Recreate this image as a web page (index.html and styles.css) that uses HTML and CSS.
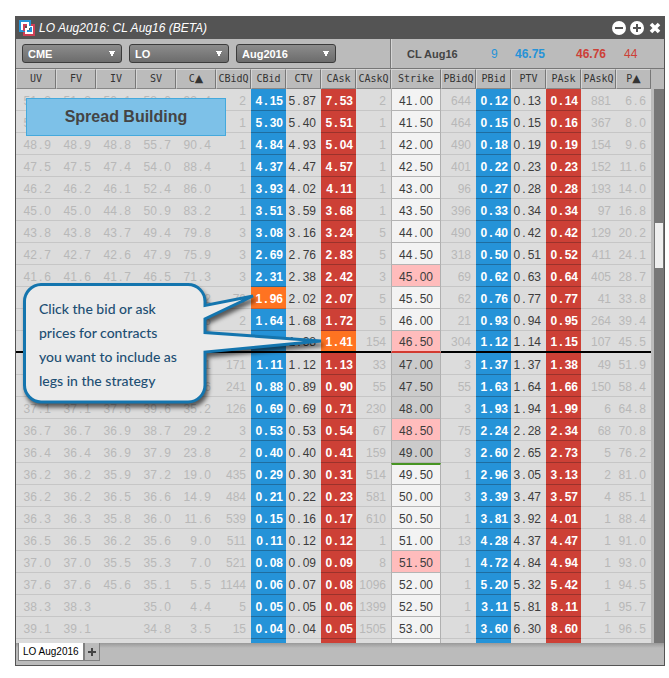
FILE: index.html
```html
<!DOCTYPE html>
<html lang="en">
<head>
<meta charset="utf-8">
<title>LO Aug2016: CL Aug16 (BETA)</title>
<link rel="stylesheet" href="styles.css">
</head>
<body>
<main class="window">
  <header class="titlebar">
    <svg class="logo" viewBox="0 0 16 16" aria-hidden="true">
      <g fill="none" stroke-width="2">
        <rect x="5" y="5" width="10" height="10" stroke="#cf3f55"/>
        <path d="M1 12V1h11" stroke="#2593d8"/>
        <path d="M11 0v6M0 11h6" stroke="#2593d8"/>
        <rect x="3" y="3" width="6" height="6" stroke="#fff"/>
        <path d="M13 6v7H6M10 7h4M7 10v4" stroke="#fff"/>
        <path d="M5 11V5h2" stroke="#cf3f55"/>
        <path d="M8 11h4V7" stroke="#2593d8"/>
      </g>
    </svg>
    <h1 class="title">LO Aug2016: CL Aug16 (BETA)</h1>
    <div class="window-buttons">
      <button type="button" aria-label="Minimize"><svg viewBox="0 0 14 14"><circle cx="7" cy="7" r="7" fill="#fff"/><path d="M3 7h8" stroke="#545454" stroke-width="2"/></svg></button>
      <button type="button" aria-label="Maximize"><svg viewBox="0 0 14 14"><circle cx="7" cy="7" r="7" fill="#fff"/><path d="M3 7h8M7 3v8" stroke="#545454" stroke-width="2"/></svg></button>
      <button type="button" aria-label="Close"><svg viewBox="0 0 14 14"><path d="M3 3l8 8M11 3l-8 8" stroke="#fff" stroke-width="3.6"/></svg></button>
    </div>
  </header>

  <div class="toolbar">
    <div class="filters">
      <select class="filter" aria-label="Exchange"><option>CME</option></select>
      <select class="filter" aria-label="Product"><option>LO</option></select>
      <select class="filter" aria-label="Expiry"><option>Aug2016</option></select>
    </div>
    <div class="quote">
      <span class="quote-name">CL Aug16</span>
      <span class="bid">9</span>
      <strong class="bid">46.75</strong>
      <strong class="ask">46.76</strong>
      <span class="ask">44</span>
    </div>
  </div>

  <div class="grid">
    <table class="chain">
      <colgroup>
        <col span="5" class="c-greek">
        <col span="5" class="c-price">
        <col class="c-strike">
        <col span="6" class="c-price">
      </colgroup>
      <thead>
        <tr>
          <th>UV</th><th>FV</th><th>IV</th><th>SV</th><th>C<span class="delta">▲</span></th>
          <th>CBidQ</th><th>CBid</th><th>CTV</th><th>CAsk</th><th>CAskQ</th>
          <th>Strike</th>
          <th>PBidQ</th><th>PBid</th><th>PTV</th><th>PAsk</th><th>PAskQ</th><th>P<span class="delta">▲</span></th>
        </tr>
      </thead>
      <tbody id="rows"></tbody>
    </table>
    <div class="scrollbar"><div class="thumb"></div></div>
  </div>

  <footer class="tabs">
    <button type="button" class="tab tab-active">LO Aug2016</button>
    <button type="button" class="tab tab-add" aria-label="Add tab"><svg viewBox="0 0 8 8"><path d="M0 4h8M4 0v8" stroke="#444" stroke-width="2"/></svg></button>
  </footer>

  <div class="banner">Spread Building</div>

  <div class="callout">
    <svg class="callout-shape" viewBox="0 0 184 121" aria-hidden="true">
      <path d="M18 1.5H165A17 17 0 0 1 182 18.500V22.500L230 13L182 36V49.500L298 58L182 69V102A17 17 0 0 1 165 119H18A17 17 0 0 1 1.500 102V18.500A17 17 0 0 1 18 1.500Z" fill="#ebebeb" stroke="#1475ae" stroke-width="3"/>
    </svg>
    <p class="callout-text">Click the bid or ask<br>prices for contracts<br>you want to include as<br>legs in the strategy</p>
  </div>
</main>
<script src="app.js"></script>
</body>
</html>
```
FILE: styles.css
```css
* {
  box-sizing: border-box;
}

body {
  margin: 0;
  padding: 16px 4px 12px 15px;
  background: #fff;
  font-family: "Liberation Sans", Arial, sans-serif;
  font-size: 12px;
  color: #444;
}

.window {
  position: relative;
  border: 1px solid #545454;
  border-top: 0;
  background: #bbb;
}

.titlebar {
  display: flex;
  align-items: center;
  gap: 4px;
  height: 23px;
  padding: 0 2px 0 3px;
  background: #545454;
}

.logo {
  width: 16px;
  height: 16px;
}

.title {
  flex: 1;
  margin: 0;
  font-size: 12px;
  font-style: italic;
  font-weight: normal;
  color: #fff;
}

.window-buttons {
  display: flex;
  gap: 4px;
}

.window-buttons button {
  width: 14px;
  height: 14px;
  padding: 0;
  border: 0;
  background: none;
}

.window-buttons svg {
  display: block;
}

.toolbar {
  display: grid;
  grid-template-columns: 375fr 273fr;
  height: 30px;
  border-bottom: 1px solid #777;
}

.filters {
  display: flex;
  align-items: center;
  gap: 7px;
  padding: 0 6px;
  border-right: 1px solid #777;
}

.filter {
  appearance: none;
  width: 100px;
  height: 19px;
  padding: 0 5px;
  border: 1px solid #3c3c3c;
  border-radius: 3px;
  background:
    linear-gradient(to bottom right, #fff 50%, transparent 50%) right 6px center / 3px 6px no-repeat,
    linear-gradient(to bottom left, #fff 50%, transparent 50%) right 9px center / 3px 6px no-repeat,
    linear-gradient(#8c8c8c, #6c6c6c);
  font: bold 11px "Liberation Sans", Arial, sans-serif;
  color: #fff;
}

.quote {
  display: grid;
  grid-template-columns: 84fr 24fr 61fr 48fr 40fr;
  align-items: center;
  padding-left: 15px;
  border-left: 1px solid #d6d6d6;
}

.quote-name {
  font-size: 11px;
  font-weight: bold;
}

.bid {
  color: #2593d8;
}

.ask {
  color: #cd4036;
}

.grid {
  display: flex;
  gap: 3px;
}

.chain {
  flex: 1;
  table-layout: fixed;
  border-spacing: 0;
  background: #dcdcdc;
}

.c-greek {
  width: 40px;
}

.c-price {
  width: 35px;
}

.c-strike {
  width: 50px;
}

.chain th {
  height: 20px;
  padding: 0;
  border: 1px solid #d6d6d6;
  border-right-color: #777;
  border-bottom-color: #888;
  background: #bbb;
  font: 10px "DejaVu Sans Mono", monospace;
  line-height: 18px;
  color: #333;
}

.delta {
  font: 11px "DejaVu Sans", sans-serif;
  line-height: 1;
}

.chain td {
  height: 22px;
  padding: 4px 5px 0 0;
  border-bottom: 1px solid #c6c6c6;
  line-height: 17px;
  text-align: right;
  white-space: nowrap;
  color: #b8b8b8;
}

.point {
  padding: 0 2px;
}

.chain .value {
  color: #3c3c3c;
}

.chain .buy,
.chain .sell {
  padding-right: 3px;
  font-weight: bold;
  color: #fff;
}

.chain .buy {
  border-bottom-color: #1f6d9f;
  background: #2593d8;
}

.chain .sell {
  border-bottom-color: #9a322b;
  background: #cd4036;
}

.chain .picked {
  border-bottom-color: #c8602a;
  background: #ff7321;
}

.chain .strike {
  padding-right: 0;
  border-right: 1px solid #b0b0b0;
  border-left: 1px solid #b0b0b0;
  border-bottom-color: #b4b4b4;
  background: #f3f3f3;
  text-align: center;
  color: #3c3c3c;
}

.chain .inner {
  background: #cbcbcb;
}

.chain .marked {
  background: #ffbcbc;
}

.chain .at-money td {
  padding-top: 3px;
  border-bottom: 2px solid #000;
}

.chain .at-money .strike {
  border-bottom-color: #d23a30;
}

.chain .settle .strike {
  padding-top: 2px;
  border-top: 2px solid #479422;
}

.chain .rest td {
  height: 4px;
  padding: 0;
  border-bottom: 0;
}

.scrollbar {
  width: 10px;
  margin-top: 20px;
  padding: 134px 1px 0;
  background: #777;
}

.thumb {
  height: 45px;
  background: #eee;
}

.tabs {
  display: flex;
  height: 22px;
  padding: 0 2px 4px;
  background: linear-gradient(#999, #bbb 5px);
}

.tab {
  padding: 0 4px;
  border: 1px solid #808080;
  border-top: 0;
  background: #bbb;
  font: 10px "Liberation Sans", Arial, sans-serif;
  color: #000;
}

.tab-active {
  background: #fff;
}

.tab-add {
  width: 16px;
  padding: 0 3px;
}

.tab-add svg {
  display: block;
  width: 8px;
  height: 8px;
}

.banner {
  position: absolute;
  top: 82px;
  left: 10px;
  width: 200px;
  border: 1px solid #45a9dc;
  background: #7dc1e8;
  font-size: 16px;
  font-weight: bold;
  line-height: 36px;
  text-align: center;
}

.callout {
  position: absolute;
  top: 267px;
  left: 7px;
  width: 184px;
  height: 121px;
  padding: 14px 0 0 16px;
}

.callout-shape {
  position: absolute;
  inset: 0;
  overflow: visible;
  filter: drop-shadow(2px 4px 2px rgba(0, 0, 0, 0.6));
}

.callout-text {
  position: relative;
  margin: 0;
  font: 500 14px/24px Lato, sans-serif;
  white-space: nowrap;
  color: #1d4f73;
}
```
FILE: app.js
```js
// UV FV IV SV C▲ CBidQ CBid CTV CAsk CAskQ Strike PBidQ PBid PTV PAsk PAskQ P▲
const rows = `
51.2 51.2 50.1 58.0 92.4 2 4.15 5.87 7.53 2 41.00 644 0.12 0.13 0.14 881 6.6
50.2 50.2 49.8 56.8 91.5 1 5.30 5.40 5.51 1 41.50 464 0.15 0.15 0.16 367 8.0
48.9 48.9 48.8 55.7 90.4 1 4.84 4.93 5.04 1 42.00 490 0.18 0.19 0.19 154 9.6
47.5 47.5 47.4 54.0 88.4 1 4.37 4.47 4.57 1 42.50 401 0.22 0.23 0.23 152 11.6
46.2 46.2 46.1 52.4 86.0 1 3.93 4.02 4.11 1 43.00 96 0.27 0.28 0.28 193 14.0
45.0 45.0 44.8 50.9 83.2 1 3.51 3.59 3.68 1 43.50 396 0.33 0.34 0.34 97 16.8
43.8 43.8 43.7 49.4 79.8 3 3.08 3.16 3.24 5 44.00 490 0.40 0.42 0.42 129 20.2
42.7 42.7 42.6 47.9 75.9 3 2.69 2.76 2.83 5 44.50 318 0.50 0.51 0.52 411 24.1
41.6 41.6 41.7 46.5 71.3 3 2.31 2.38 2.42 3 45.00* 69 0.62 0.63 0.64 405 28.7
40.6 40.6 40.7 45.1 66.2 79 1.96! 2.02 2.07 5 45.50 62 0.76 0.77 0.77 41 33.8
39.6 39.6 39.8 43.8 60.6 2 1.64 1.68 1.72 5 46.00 21 0.93 0.94 0.95 264 39.4
38.9 38.9 39.0 42.6 54.5 5 1.36 1.38 1.41! 154 46.50* 304 1.12 1.14 1.15 107 45.5
38.2 38.2 38.4 41.5 48.1 171 1.11 1.12 1.13 33 47.00- 3 1.37 1.37 1.38 49 51.9
37.6 37.6 38.0 40.5 41.6 241 0.88 0.89 0.90 55 47.50- 55 1.63 1.64 1.66 150 58.4
37.1 37.1 37.6 39.6 35.2 126 0.69 0.69 0.71 230 48.00- 3 1.93 1.94 1.99 6 64.8
36.7 36.7 36.9 38.7 29.2 3 0.53 0.53 0.54 67 48.50* 75 2.24 2.28 2.34 68 70.8
36.4 36.4 36.9 37.9 23.8 2 0.40 0.40 0.41 159 49.00- 3 2.60 2.65 2.73 5 76.2
36.2 36.2 35.9 37.2 19.0 435 0.29 0.30 0.31 514 49.50 1 2.96 3.05 3.13 2 81.0
36.2 36.2 36.5 36.6 14.9 484 0.21 0.22 0.23 581 50.00 3 3.39 3.47 3.57 4 85.1
36.3 36.3 35.8 36.0 11.6 539 0.15 0.16 0.17 610 50.50 1 3.81 3.92 4.01 1 88.4
36.5 36.5 36.2 35.6 9.0 511 0.11 0.12 0.12 1 51.00 13 4.28 4.37 4.47 1 91.0
37.0 37.0 35.5 35.3 7.0 521 0.08 0.09 0.09 8 51.50* 1 4.72 4.84 4.94 1 93.0
37.6 37.6 45.6 35.1 5.5 1144 0.06 0.07 0.08 1096 52.00 1 5.20 5.32 5.42 1 94.5
38.3 38.3 _ 35.0 4.4 5 0.05 0.05 0.06 1399 52.50 1 3.11 5.81 8.11 1 95.7
39.1 39.1 _ 34.8 3.5 15 0.04 0.04 0.05 1505 53.00 1 3.60 6.30 8.60 1 96.5
_ _ _ _ _ _ _ _ _ _ _ _ _ _ _ _ _`.trim().split("\n");

const columnClass = { 6: "buy", 7: "value", 8: "sell", 10: "strike", 12: "buy", 13: "value", 14: "sell" };
const rowClass = { 11: "at-money", 17: "settle", 25: "rest" };
// Suffixes on a value: "!" picked leg, "*" marked strike, "-" inner strike.
const flagClass = { "!": "picked", "*": "marked", "-": "inner" };

document.getElementById("rows").innerHTML = rows.map((line, r) => {
  const cells = line.split(" ").map((raw, c) => {
    const flag = flagClass[raw.slice(-1)] || "";
    const text = raw.replace(/[!*_-]/g, "").replace(".", '<span class="point">.</span>');
    return `<td class="${columnClass[c] || ""} ${flag}">${text}</td>`;
  });
  return `<tr class="${rowClass[r] || ""}">${cells.join("")}</tr>`;
}).join("");
```
